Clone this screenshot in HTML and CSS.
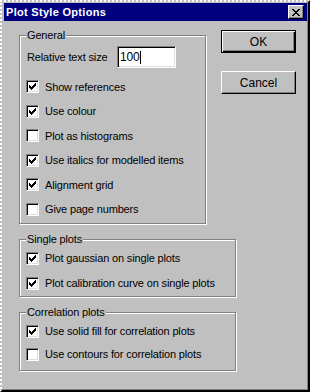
FILE: index.html
```html
<!DOCTYPE html>
<html lang="en">
<head>
    <meta charset="UTF-8">
    <title>Plot Style Options</title>
    <link rel="stylesheet" href="styles.css">
</head>
<body>
    <div class="window">
        <div class="titlebar">
            <span class="title">Plot Style Options</span>
            <span class="close">
                <svg width="8" height="7" viewBox="0 0 8 7"><path d="M0 0h2v1h-2z M6 0h2v1h-2z M1 1h2v1h-2z M5 1h2v1h-2z M2 2h4v1h-4z M3 3h2v1h-2z M2 4h4v1h-4z M1 5h2v1h-2z M5 5h2v1h-2z M0 6h2v1h-2z M6 6h2v1h-2z" fill="#000"/></svg>
            </span>
        </div>

        <div class="client">
            <!-- General -->
            <div class="group general">
                <span class="legend">General</span>
                <div class="field_row">
                    <span>Relative text size</span>
                    <div class="textbox">100<span class="caret"></span></div>
                </div>
                <div class="check"><span class="box on"><svg width="7" height="7" viewBox="0 0 7 7"><path d="M0 2H1V3H2V4H3V3H4V2H5V1H6V0H7V3H6V4H5V5H4V6H3V7H2V6H1V5H0Z"/></svg></span>Show references</div>
                <div class="check"><span class="box on"><svg width="7" height="7" viewBox="0 0 7 7"><path d="M0 2H1V3H2V4H3V3H4V2H5V1H6V0H7V3H6V4H5V5H4V6H3V7H2V6H1V5H0Z"/></svg></span>Use colour</div>
                <div class="check"><span class="box"></span>Plot as histograms</div>
                <div class="check"><span class="box on"><svg width="7" height="7" viewBox="0 0 7 7"><path d="M0 2H1V3H2V4H3V3H4V2H5V1H6V0H7V3H6V4H5V5H4V6H3V7H2V6H1V5H0Z"/></svg></span>Use italics for modelled items</div>
                <div class="check"><span class="box on"><svg width="7" height="7" viewBox="0 0 7 7"><path d="M0 2H1V3H2V4H3V3H4V2H5V1H6V0H7V3H6V4H5V5H4V6H3V7H2V6H1V5H0Z"/></svg></span>Alignment grid</div>
                <div class="check"><span class="box"></span>Give page numbers</div>
            </div>

            <div class="buttons">
                <button class="button default">OK</button>
                <button class="button">Cancel</button>
            </div>

            <!-- Single plots -->
            <div class="group wide single">
                <span class="legend">Single plots</span>
                <div class="check"><span class="box on"><svg width="7" height="7" viewBox="0 0 7 7"><path d="M0 2H1V3H2V4H3V3H4V2H5V1H6V0H7V3H6V4H5V5H4V6H3V7H2V6H1V5H0Z"/></svg></span>Plot gaussian on single plots</div>
                <div class="check"><span class="box on"><svg width="7" height="7" viewBox="0 0 7 7"><path d="M0 2H1V3H2V4H3V3H4V2H5V1H6V0H7V3H6V4H5V5H4V6H3V7H2V6H1V5H0Z"/></svg></span>Plot calibration curve on single plots</div>
            </div>

            <!-- Correlation plots -->
            <div class="group wide correlation">
                <span class="legend">Correlation plots</span>
                <div class="check"><span class="box on"><svg width="7" height="7" viewBox="0 0 7 7"><path d="M0 2H1V3H2V4H3V3H4V2H5V1H6V0H7V3H6V4H5V5H4V6H3V7H2V6H1V5H0Z"/></svg></span>Use solid fill for correlation plots</div>
                <div class="check"><span class="box"></span>Use contours for correlation plots</div>
            </div>
        </div>
    </div>
</body>
</html>
```

FILE: styles.css
```css
body{
    margin: 0;
    background-color: #c0c0c0;
    font-family: "Liberation Sans", Arial, sans-serif;
    font-size: 11px;
    letter-spacing: -0.15px;
    color: #000;
}
.window{
    width: 310px;
    height: 392px;
    box-sizing: border-box;
    background-color: #c0c0c0;
    border-left: 2px dotted #fff;
    border-top: 2px dotted #fff;
    border-right: 2px solid #000;
    border-bottom: 2px solid #000;
    box-shadow: inset -1px -1px #808080;
    padding: 1px 1px 0 2px;
}
.titlebar{
    height: 18px;
    background-color: #000080;
    display: flex;
    align-items: center;
    justify-content: space-between;
    padding: 0 3px 0 2px;
}
.title{
    color: #fff;
    font-weight: bold;
    font-size: 11px;
    letter-spacing: 0.3px;
}
.close{
    width: 16px;
    height: 14px;
    box-sizing: border-box;
    background-color: #c0c0c0;
    border: 1px solid;
    border-color: #fff #000 #000 #fff;
    box-shadow: inset -1px -1px #808080;
    display: flex;
    align-items: center;
    justify-content: center;
    padding-right: 1px;
}
/* 본문 영역 : 그룹 + 버튼 */
.client{
    display: grid;
    grid-template-columns: 202px 75px;
    row-gap: 15px;
    padding: 9px 0 0 15px;
}
.group{
    position: relative;
    box-sizing: border-box;
    border: 1px solid #808080;
    box-shadow: inset 1px 1px #fff, 1px 1px #fff;
    display: flex;
    flex-direction: column;
    padding-left: 6px;
}
.general{
    width: 187px;
    margin-top: 5px;
    padding-top: 10px;
    padding-bottom: 7px;
}
.wide{
    grid-column: 1 / 3;
    width: 217px;
}
.single{
    padding-top: 12px;
    padding-bottom: 6px;
    gap: 12px;
}
.correlation{
    padding-top: 12px;
    padding-bottom: 9px;
    gap: 10px;
}
.legend{
    position: absolute;
    left: 6px;
    top: -8px;
    padding: 0 1px;
    background-color: #c0c0c0;
    line-height: 14px;
}
.field_row{
    display: flex;
    align-items: center;
    justify-content: space-between;
    padding-left: 1px;
    width: 150px;
    box-sizing: border-box;
    margin-bottom: 12px;
}
.textbox{
    width: 59px;
    height: 22px;
    box-sizing: border-box;
    background-color: #fff;
    border: 1px solid;
    border-color: #808080 #fff #fff #808080;
    box-shadow: inset 1px 1px #000, inset -1px -1px #dfdfdf;
    padding: 3px 0 0 2px;
    line-height: 15px;
    display: flex;
    align-items: flex-start;
    font-size: 12px;
}
.caret{
    width: 1px;
    height: 13px;
    margin-top: 1px;
    background-color: #000;
}
.check{
    display: flex;
    align-items: center;
    height: 13px;
    white-space: nowrap;
}
.general .check + .check{
    margin-top: 11.6px;
}
.box{
    width: 13px;
    height: 13px;
    box-sizing: border-box;
    margin-right: 6px;
    background-color: #fff;
    border: 1px solid;
    border-color: #808080 #fff #fff #808080;
    box-shadow: inset 1px 1px #000, inset -1px -1px #dfdfdf;
    display: flex;
    align-items: center;
    justify-content: center;
}
.box svg{
    display: block;
}
.buttons{
    display: flex;
    flex-direction: column;
    gap: 18px;
}
.button{
    width: 75px;
    height: 23px;
    box-sizing: border-box;
    background-color: #c0c0c0;
    border: 1px solid;
    border-color: #fff #000 #000 #fff;
    box-shadow: inset -1px -1px #808080;
    font-family: "Liberation Sans", Arial, sans-serif;
    font-size: 12px;
    color: #000;
    padding: 0;
}
.default{
    border: 1px solid #000;
    box-shadow: inset 1px 1px #fff, inset -1px -1px #000, inset -2px -2px #808080;
}
```
